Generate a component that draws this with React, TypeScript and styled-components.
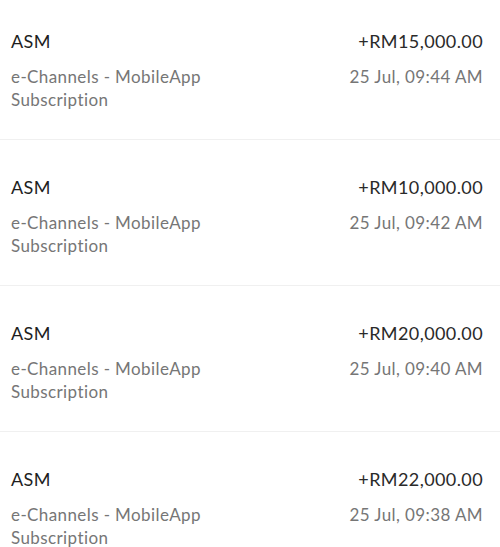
import styled, { createGlobalStyle } from "styled-components";

const GlobalStyle = createGlobalStyle`
  html, body {
    margin: 0;
    padding: 0;
    background: #ffffff;
  }
  body {
    font-family: "Lato", "Open Sans", sans-serif;
    overflow: hidden;
  }
`;

const List = styled.div`
  display: flex;
  flex-direction: column;
  margin-top: -6px;
`;

const Row = styled.div`
  display: flex;
  justify-content: space-between;
  align-items: flex-start;
  padding: 35px 17px 28px 11px;
  border-bottom: 1px solid #f0f0f0;
`;

const Left = styled.div`
  display: flex;
  flex-direction: column;
  gap: 12px;
`;

const Right = styled.div`
  display: flex;
  flex-direction: column;
  align-items: flex-end;
  gap: 12px;
`;

const Title = styled.div`
  font-size: 18px;
  line-height: 24px;
  letter-spacing: 0.4px;
  color: #1e1e1e;
`;

const Amount = styled(Title)`
  color: #2a2a2a;
`;

const Sub = styled.div`
  font-size: 17px;
  line-height: 23px;
  letter-spacing: 0.4px;
  color: #767676;
  max-width: 220px;
`;

const items = [
  { amount: "+RM15,000.00", time: "25 Jul, 09:44 AM" },
  { amount: "+RM10,000.00", time: "25 Jul, 09:42 AM" },
  { amount: "+RM20,000.00", time: "25 Jul, 09:40 AM" },
  { amount: "+RM22,000.00", time: "25 Jul, 09:38 AM" },
];

function App() {
  return (
    <>
      <GlobalStyle />
      <List>
        {items.map((it) => (
          <Row key={it.time}>
            <Left>
              <Title>ASM</Title>
              <Sub>e-Channels - MobileApp Subscription</Sub>
            </Left>
            <Right>
              <Amount>{it.amount}</Amount>
              <Sub>{it.time}</Sub>
            </Right>
          </Row>
        ))}
      </List>
    </>
  );
}

export default App;
